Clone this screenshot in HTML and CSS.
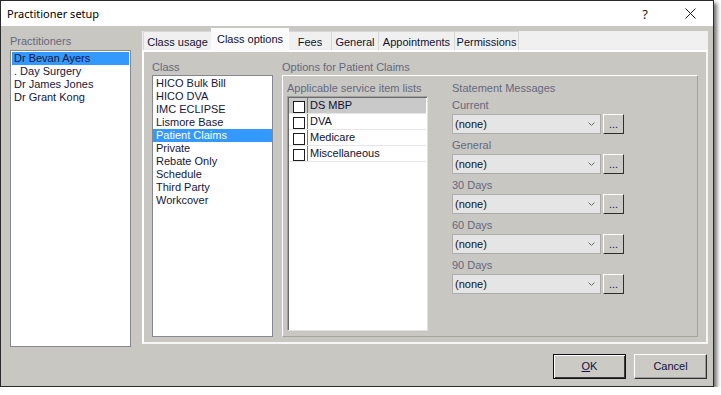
FILE: index.html
```html
<!DOCTYPE html>
<html>
<head>
<meta charset="utf-8">
<title>Practitioner setup</title>
<link rel="stylesheet" href="styles.css">
</head>
<body>
<div class="window">
  <div class="titlebar">
    <span class="title">Practitioner setup</span>
    <span class="help">?</span>
    <svg class="close" width="11" height="11" viewBox="0 0 11 11"><path d="M0.5 0.5L10.5 10.5M10.5 0.5L0.5 10.5" stroke="#1a1a1a" stroke-width="1" fill="none"/></svg>
  </div>
  <div class="main">
    <div class="prac">
      <div class="label">Practitioners</div>
      <ul class="listbox prac-list">
        <li class="sel">Dr Bevan Ayers</li>
        <li>. Day Surgery</li>
        <li>Dr James Jones</li>
        <li>Dr Grant Kong</li>
      </ul>
    </div>
    <div class="tabctl">
      <div class="tabstrip">
        <div class="tab t1">Class usage</div>
        <div class="tab active t2">Class options</div>
        <div class="tab t3">Fees</div>
        <div class="tab t4">General</div>
        <div class="tab t5">Appointments</div>
        <div class="tab t6">Permissions</div>
      </div>
      <div class="page">
        <div class="classcol">
          <div class="label">Class</div>
          <ul class="listbox class-list">
            <li>HICO Bulk Bill</li>
            <li>HICO DVA</li>
            <li>IMC ECLIPSE</li>
            <li>Lismore Base</li>
            <li class="sel">Patient Claims</li>
            <li>Private</li>
            <li>Rebate Only</li>
            <li>Schedule</li>
            <li>Third Party</li>
            <li>Workcover</li>
          </ul>
        </div>
        <div class="optcol">
          <div class="label">Options for Patient Claims</div>
          <div class="group">
            <div class="svccol">
              <div class="label">Applicable service item lists</div>
              <div class="svclist">
                <div class="row sel"><span class="chk"><span class="box"></span></span><span class="name">DS MBP</span></div>
                <div class="row"><span class="chk"><span class="box"></span></span><span class="name">DVA</span></div>
                <div class="row"><span class="chk"><span class="box"></span></span><span class="name">Medicare</span></div>
                <div class="row"><span class="chk"><span class="box"></span></span><span class="name">Miscellaneous</span></div>
              </div>
            </div>
            <div class="stmtcol">
              <div class="label">Statement Messages</div>
              <div class="field">
                <div class="label">Current</div>
                <div class="combo-row">
                  <div class="combo"><span>(none)</span><svg width="7" height="4" viewBox="0 0 7 4"><polyline points="0.5,0.5 3.5,3.5 6.5,0.5" fill="none" stroke="#6a6a6a" stroke-width="1"/></svg></div>
                  <div class="dots">...</div>
                </div>
              </div>
              <div class="field">
                <div class="label">General</div>
                <div class="combo-row">
                  <div class="combo"><span>(none)</span><svg width="7" height="4" viewBox="0 0 7 4"><polyline points="0.5,0.5 3.5,3.5 6.5,0.5" fill="none" stroke="#6a6a6a" stroke-width="1"/></svg></div>
                  <div class="dots">...</div>
                </div>
              </div>
              <div class="field">
                <div class="label">30 Days</div>
                <div class="combo-row">
                  <div class="combo"><span>(none)</span><svg width="7" height="4" viewBox="0 0 7 4"><polyline points="0.5,0.5 3.5,3.5 6.5,0.5" fill="none" stroke="#6a6a6a" stroke-width="1"/></svg></div>
                  <div class="dots">...</div>
                </div>
              </div>
              <div class="field">
                <div class="label">60 Days</div>
                <div class="combo-row">
                  <div class="combo"><span>(none)</span><svg width="7" height="4" viewBox="0 0 7 4"><polyline points="0.5,0.5 3.5,3.5 6.5,0.5" fill="none" stroke="#6a6a6a" stroke-width="1"/></svg></div>
                  <div class="dots">...</div>
                </div>
              </div>
              <div class="field">
                <div class="label">90 Days</div>
                <div class="combo-row">
                  <div class="combo"><span>(none)</span><svg width="7" height="4" viewBox="0 0 7 4"><polyline points="0.5,0.5 3.5,3.5 6.5,0.5" fill="none" stroke="#6a6a6a" stroke-width="1"/></svg></div>
                  <div class="dots">...</div>
                </div>
              </div>
            </div>
          </div>
        </div>
      </div>
    </div>
  </div>
  <div class="footer">
    <div class="btn default"><span><u>O</u>K</span></div>
    <div class="btn">Cancel</div>
  </div>
</div>
</body>
</html>
```

FILE: styles.css
```css
* { box-sizing: border-box; margin: 0; padding: 0; }
body {
  margin: 0;
  background: #fff;
  font: 11px/13px "Liberation Sans", Arial, sans-serif;
  color: #16163a;
}
.window {
  width: 714px;
  height: 387px;
  border: 1px solid #2a2a2a;
  background: #c8c7c2;
  box-shadow: 3px 3px 4px rgba(0, 0, 0, 0.55);
  display: flex;
  flex-direction: column;
}
.titlebar {
  height: 25px;
  flex: none;
  background: #fff;
  display: flex;
  align-items: center;
  padding-left: 6px;
}
.title {
  flex: 1;
  font: 11px/16px "Noto Sans", sans-serif;
  color: #000;
}
.help {
  font: 13px/16px "Noto Sans", sans-serif;
  color: #1a1a1a;
  margin-right: 37px;
}
.close { margin-right: 17px; display: block; }

.label { color: #65687e; height: 13px; white-space: nowrap; }

.main {
  display: flex;
  gap: 11px;
  padding: 0 5px 0 9px;
  flex: none;
}
.prac { width: 121px; padding-top: 9px; display: flex; flex-direction: column; }
.prac .label { margin-bottom: 2px; }
.listbox {
  list-style: none;
  background: #fff;
  border: 1px solid #868891;
  padding: 1px;
}
.listbox li { height: 13px; padding-left: 2px; white-space: nowrap; }
.listbox li.sel { background: #3399ff; }
.prac-list { height: 297px; }
.class-list { flex: 1; padding: 1px 0; }
.class-list li { padding-left: 3px; }
.class-list li.sel { color: #fff; }

.tabctl {
  width: 566px;
  height: 316px;
  margin-top: 2px;
  display: flex;
  flex-direction: column;
}
.tabstrip {
  height: 22px;
  flex: none;
  display: flex;
  align-items: flex-end;
  padding-left: 1px;
  background: linear-gradient(#c8c7c2 0 3px, #f0f0f0 3px);
}
.tab {
  height: 19px;
  border: 1px solid #d6d6d6;
  border-bottom: none;
  background: #f0f0f0;
  color: #101030;
  text-align: center;
  padding-top: 4px;
  margin-right: -1px;
  white-space: nowrap;
}
.tab.active {
  height: 24px;
  margin-bottom: -2px;
  background: #fbfbfb;
  border-color: #fbfbfb;
  padding-top: 4px;
  position: relative;
  z-index: 1;
}
.t1 { width: 69px; }
.t2 { width: 78px; }
.t3 { width: 44px; }
.t4 { width: 48px; }
.t5 { width: 77px; }
.t6 { width: 65px; }

.page {
  flex: 1;
  border: 2px solid #f6f6f6;
  border-top-color: #fff;
  border-left-color: #fff;
  display: flex;
  gap: 9px;
  padding: 9px 8px 5px 8px;
}
.classcol { width: 121px; display: flex; flex-direction: column; }
.classcol .label, .optcol > .label { margin-bottom: 1px; }
.optcol { flex: 1; display: flex; flex-direction: column; }
.group {
  flex: 1;
  border: 1px solid;
  border-color: #fff #a2a2a2 #a2a2a2 #fff;
  display: flex;
  gap: 24px;
  padding: 6px 4px 5px 4px;
}
.svccol { width: 141px; display: flex; flex-direction: column; }
.svccol .label { margin-bottom: 1px; }
.svclist {
  flex: 1;
  background: #fff;
  border: 1px solid;
  border-color: #a0a0a0 #e2e2e2 #e2e2e2 #a0a0a0;
  box-shadow: inset 1px 1px 0 #6a6a6a;
  padding: 1px 1px 0 1px;
}
.row {
  height: 16px;
  display: flex;
  border-bottom: 1px solid #e6e6e6;
}
.row.sel { background: #c9c9c9; }
.chk {
  width: 19px;
  border-right: 1px solid #7a7a7a;
  padding: 3px 0 0 4px;
}
.box {
  display: block;
  width: 12px;
  height: 12px;
  border: 1px solid #1e1e1e;
  background: #fff;
}
.name { padding: 1px 0 0 2px; color: #101030; }

.stmtcol { width: 172px; }
.field { margin-top: 4px; }
.field + .field { margin-top: 5px; }
.field .label { margin-bottom: 2px; }
.combo-row { display: flex; gap: 2px; }
.combo {
  width: 149px;
  height: 20px;
  background: #e5e5e5;
  border: 1px solid #acacac;
  display: flex;
  align-items: center;
  justify-content: space-between;
  padding: 0 5px 0 2px;
  color: #111;
}
.dots {
  width: 21px;
  height: 20px;
  border: 1px solid;
  border-color: #fff #2e2e2e #2e2e2e #fff;
  background: #cbcac5;
  text-align: center;
  line-height: 18px;
  color: #1a1060;
  font-size: 11px;
}

.footer {
  margin-top: auto;
  display: flex;
  justify-content: flex-end;
  gap: 8px;
  padding: 0 6px 7px 0;
}
.btn {
  width: 73px;
  height: 25px;
  border: 1px solid;
  border-color: #fff #2e2e2e #2e2e2e #fff;
  box-shadow: inset -1px -1px 0 #9a9a9a;
  background: #cbcac5;
  display: flex;
  align-items: center;
  justify-content: center;
  color: #101040;
}
.btn.default {
  border-color: #111;
  box-shadow: inset 1px 1px 0 #fff, inset -1px -1px 0 #3a3a3a;
}
.btn u { text-decoration: underline; }
```
